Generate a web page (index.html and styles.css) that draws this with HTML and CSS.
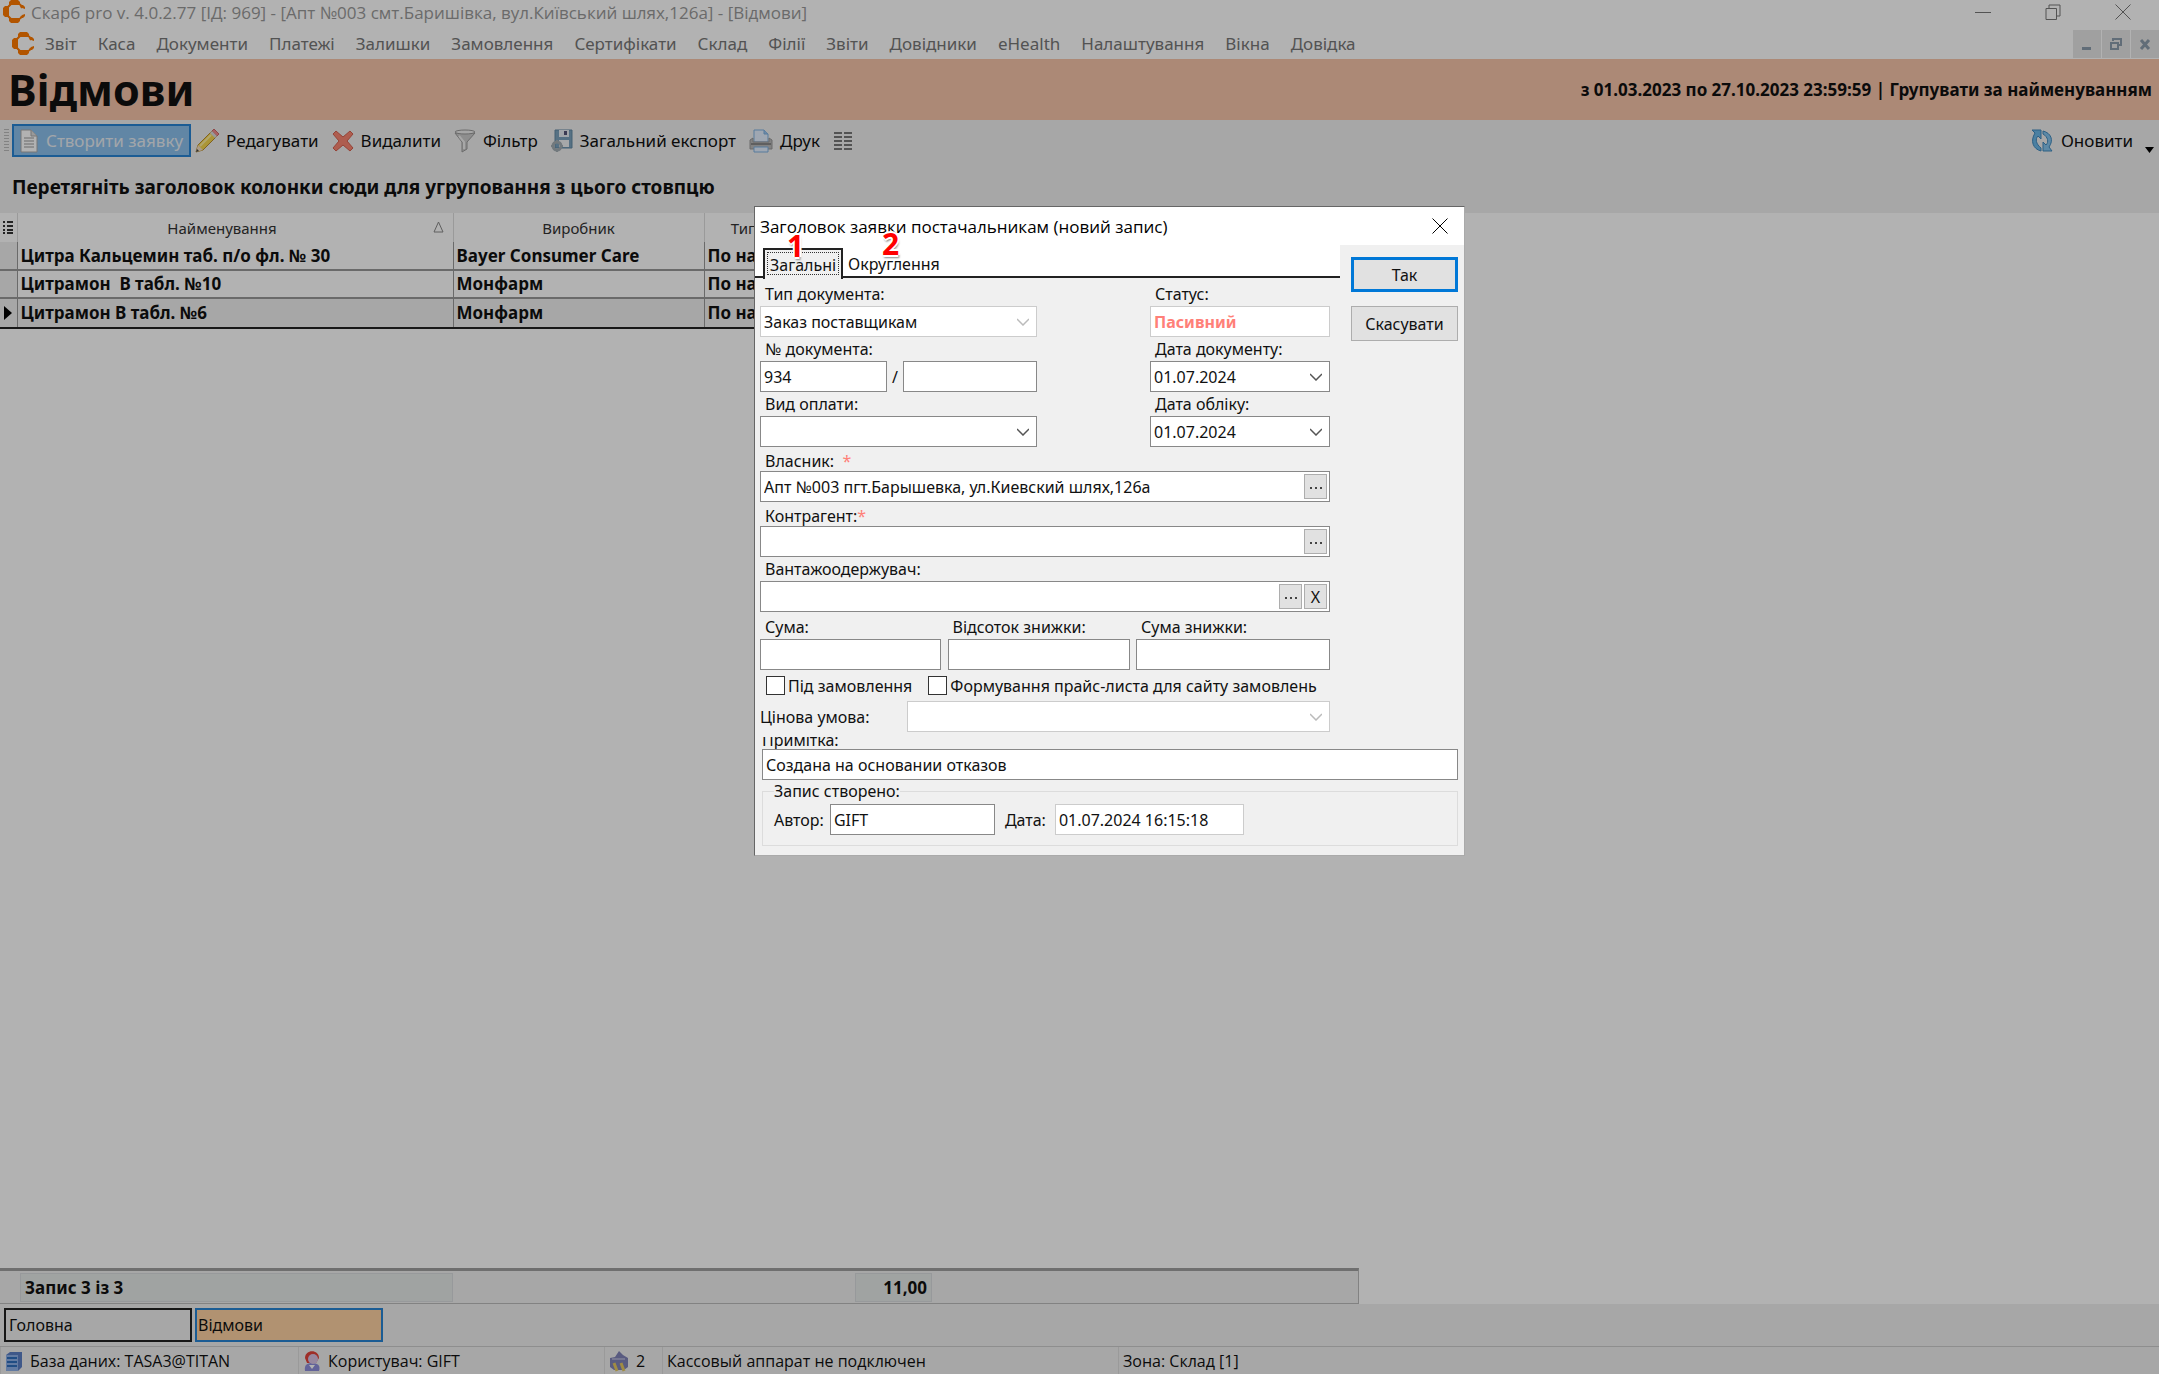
FILE: index.html
```html
<!DOCTYPE html>
<html lang="uk">
<head>
  <meta charset="UTF-8" />
  <meta name="viewport" content="width=device-width, initial-scale=1.0"/>
  <title>Скарб pro - Відмови</title>
  <link rel="stylesheet" href="styles.css">
</head>
<body>
  <svg class="sprite" width="0" height="0">
    <symbol id="logo" viewBox="0 0 22 24">
      <path d="M8 0h7l2 2v3H6V2zM0 8l2-2h4v11H2l-2-2zM6 18h11v3l-2 2H8l-2-2z" fill="#ff7a00"/>
      <path d="M18 5h2l2 2v2l-3-1zM18 18h2l2-2v-2l-3 1z" fill="#ff7a00"/>
      <path d="M17 4l2 4M5 7l3-3M5 16l3 3M17 19l2-3" stroke="#ff7a00" stroke-width="2"/>
    </symbol>
    <symbol id="restore" viewBox="0 0 16 16">
      <path d="M1 4.500h10.500v11H1zM4 4V1h11v11h-3" fill="none" stroke="currentColor"/>
    </symbol>
    <symbol id="cross" viewBox="0 0 16 16">
      <path d="M0.500 0.500l15 15M15.500 0.500l-15 15" fill="none" stroke="currentColor"/>
    </symbol>
    <symbol id="dots" viewBox="0 0 12 4">
      <path d="M0 1h2v2H0zM5 1h2v2H5zM10 1h2v2h-2z" fill="#444"/>
    </symbol>
  </svg>

  <div class="app">
    <header class="title-bar">
      <svg class="logo" width="22" height="24"><use href="#logo"/></svg>
      <span class="title-text">Скарб pro v. 4.0.2.77 [ІД: 969] - [Апт №003 смт.Баришівка, вул.Київський шлях,126а] - [Відмови]</span>
      <div class="window-buttons">
        <button type="button" aria-label="Згорнути"><svg width="16" height="16"><path d="M0 8.500h16" stroke="currentColor"/></svg></button>
        <button type="button" aria-label="Відновити"><svg width="16" height="16"><use href="#restore"/></svg></button>
        <button type="button" aria-label="Закрити"><svg width="16" height="16"><use href="#cross"/></svg></button>
      </div>
    </header>

    <nav class="menu-bar">
      <svg class="logo" width="22" height="24"><use href="#logo"/></svg>
      <a href="#">Звіт</a>
      <a href="#">Каса</a>
      <a href="#">Документи</a>
      <a href="#">Платежі</a>
      <a href="#">Залишки</a>
      <a href="#">Замовлення</a>
      <a href="#">Сертифікати</a>
      <a href="#">Склад</a>
      <a href="#">Філії</a>
      <a href="#">Звіти</a>
      <a href="#">Довідники</a>
      <a href="#">eHealth</a>
      <a href="#">Налаштування</a>
      <a href="#">Вікна</a>
      <a href="#">Довідка</a>
      <div class="mdi-buttons">
        <button type="button" aria-label="Згорнути вікно"><svg width="14" height="14"><path d="M2 10h9v3H2z" fill="#8c9cac"/></svg></button>
        <button type="button" aria-label="Відновити вікно"><svg width="14" height="14" fill="none" stroke="#8c9cac" stroke-width="2"><path d="M4 4V2h8v6h-2M2 6h7v6H2z"/></svg></button>
        <button type="button" aria-label="Закрити вікно"><svg width="14" height="14"><path d="M3 3l8 9M11 3l-8 9" stroke="#8c9cac" stroke-width="3"/></svg></button>
      </div>
    </nav>

    <div class="banner">
      <h1>Відмови</h1>
      <span class="period">з 01.03.2023 по 27.10.2023 23:59:59 | Групувати за найменуванням</span>
    </div>

    <div class="toolbar">
      <span class="grip"></span>
      <button type="button" class="tool active">
        <svg width="20" height="24" viewBox="0 0 20 24"><path d="M2 1h10l6 6v16H2z" fill="#fff" stroke="#aaa"/><path d="M12 1v6h6" fill="#ddd" stroke="#aaa"/><path d="M5 9h10M5 12h10M5 15h10M5 18h10" fill="none" stroke="#999"/></svg>
        Створити заявку
      </button>
      <button type="button" class="tool">
        <svg width="24" height="24" viewBox="0 0 24 24"><path d="M1 23l2-7L17 2l5 5L8 21z" fill="#f5d64e" stroke="#b98b2e"/><path d="M17 2l2-2 5 5-2 2z" fill="#f48a8a" stroke="#c66"/><path d="M15 4l2-2 5 5-2 2z" fill="#ddd"/><path d="M1 23l2-7 5 5z" fill="#f5dfc0"/><path d="M1 23l1-3 2 2z" fill="#444"/><path d="M5 17L16 6" stroke="#ffee9a" stroke-width="2"/></svg>
        Редагувати
      </button>
      <button type="button" class="tool">
        <svg width="22" height="22" viewBox="0 0 22 22"><path d="M1 4l3-3 7 6 7-6 3 3-6 7 6 7-3 3-7-6-7 6-3-3 6-7z" fill="#f98672" stroke="#d6604f"/></svg>
        Видалити
      </button>
      <button type="button" class="tool">
        <svg width="22" height="24" viewBox="0 0 22 24"><path d="M1 4l7 9v10l5-3v-7l8-9z" fill="#ccc" stroke="#999"/><path d="M5 7l5 6v7" fill="none" stroke="#f0f0f0" stroke-width="2"/><ellipse cx="11" cy="3" rx="10" ry="2" fill="#eee" stroke="#999"/></svg>
        Фільтр
      </button>
      <button type="button" class="tool">
        <svg width="22" height="24" viewBox="0 0 22 24"><path d="M4 1h17v18H4z" fill="#7ba3bd" stroke="#6389a5"/><path d="M8 1h10v7H8z" fill="#e8eef4"/><path d="M13 2h3v4h-3z" fill="#557"/><path d="M8 11h10v7H8z" fill="#eef1f3"/><circle cx="6" cy="17" r="4" fill="none" stroke="#a4aeb4" stroke-width="3"/><path d="M6 11v3M6 20v3M0 17h3M9 17h3" stroke="#a4aeb4" stroke-width="2"/></svg>
        Загальний експорт
      </button>
      <button type="button" class="tool">
        <svg width="24" height="24" viewBox="0 0 24 24"><path d="M5 1h10l4 4v8H5z" fill="#e4f0ff" stroke="#7fb0e0"/><path d="M15 1v4h4" fill="#9cc6f0" stroke="#7fb0e0"/><path d="M1 11l3-2v4h16V9l3 2v9H1z" fill="#bbb" stroke="#999"/><path d="M2 14h20v2H2z" fill="#888"/><path d="M5 18h14v5H5z" fill="#e4f0ff" stroke="#7fb0e0"/></svg>
        Друк
      </button>
      <button type="button" class="tool" aria-label="Колонки">
        <svg width="20" height="18" viewBox="0 0 20 18"><path d="M1 1h8M1 5h8M1 9h8M1 13h8M1 17h8M11 1h8M11 5h8M11 9h8M11 13h8M11 17h8" stroke="#777" stroke-width="2"/></svg>
      </button>
      <button type="button" class="tool refresh">
        <svg width="24" height="24" viewBox="0 0 24 24"><path d="M2 1h9v9L8 7c-3 3-2 8 3 12v3C3 20 0 12 5 4z" fill="#6cb8e8" stroke="#4089bd"/><path d="M22 22h-9v-9l3 3c3-3 2-8-3-11V2c8 2 11 9 6 16z" fill="#86c5ee" stroke="#4089bd"/></svg>
        Оновити
      </button>
      <button type="button" class="drop" aria-label="Ще"><svg width="10" height="6"><path d="M0 0h9L4.500 6z"/></svg></button>
    </div>

    <div class="group-panel">Перетягніть заголовок колонки сюди для угруповання з цього стовпцю</div>

    <main class="grid-area">
      <table class="grid">
        <colgroup>
          <col class="col-mark"><col class="col-name"><col class="col-maker"><col class="col-type"><col>
        </colgroup>
        <thead>
          <tr>
            <th><svg width="10" height="14"><path d="M0 2h2M4 2h6M0 6h2M4 6h6M0 10h2M4 10h6M0 13h2M4 13h6" stroke="#333" stroke-width="2"/></svg></th>
            <th class="sorted">Найменування <svg class="sort" width="11" height="12"><path d="M1 11L5.500 1 10 11z" fill="none" stroke="#888"/></svg></th>
            <th>Виробник</th>
            <th>Тип</th>
            <th></th>
          </tr>
        </thead>
        <tbody>
          <tr><td></td><td>Цитра Кальцемин таб. п/о фл. № 30</td><td>Bayer Consumer Care</td><td>По на</td><td></td></tr>
          <tr><td></td><td>Цитрамон&nbsp; В табл. №10</td><td>Монфарм</td><td>По на</td><td></td></tr>
          <tr class="current"><td><svg width="8" height="14"><path d="M0 0l8 7-8 7z"/></svg></td><td>Цитрамон В табл. №6</td><td>Монфарм</td><td>По на</td><td></td></tr>
        </tbody>
      </table>
    </main>

    <div class="summary">
      <div class="summary-row">
        <span class="summary-count">Запис 3 із 3</span>
        <span class="summary-total">11,00</span>
      </div>
    </div>

    <div class="window-tabs">
      <button type="button">Головна</button>
      <button type="button" class="selected">Відмови</button>
    </div>

    <footer class="status-bar">
      <span class="status-db">
        <svg width="18" height="20" viewBox="0 0 18 20"><path d="M1 4l4-3h12v15l-4 4H1z" fill="#5b7fc4"/><path d="M1 4h12v16H1z" fill="#8fb0e8"/><path d="M2 7h10M2 11h10M2 15h10" stroke="#2f6fbe" stroke-width="2"/></svg>
        База даних: TASA3@TITAN
      </span>
      <span class="status-user">
        <svg width="18" height="22" viewBox="0 0 18 22"><path d="M2 21c-1-6 2-8 7-8s9 2 7 8z" fill="#8f8fdc"/><path d="M2 8c0-9 14-9 14 0l-3 5H4z" fill="#e2433a"/><circle cx="10" cy="9" r="5" fill="#d9c3e4"/><path d="M6 15l3 4 3-4z" fill="#fff"/></svg>
        Користувач: GIFT
      </span>
      <span class="status-shops">
        <svg width="20" height="22" viewBox="0 0 20 22"><path d="M1 8l5-1 4-6 4 4 5 3v9l-4 3H5l-4-3z" fill="#8083b8"/><path d="M5 13l3 8M12 13l3 8" stroke="#e5c860" stroke-width="3"/><path d="M3 9h13" stroke="#a9abd0" stroke-width="2"/></svg>
        2
      </span>
      <span class="status-cash">Кассовый аппарат не подключен</span>
      <span>Зона: Склад [1]</span>
    </footer>
  </div>

  <div class="backdrop"></div>

  <div class="dialog" role="dialog" aria-labelledby="dialog-title">
    <div class="dialog-title">
      <span id="dialog-title">Заголовок заявки постачальникам (новий запис)</span>
      <button type="button" aria-label="Закрити"><svg width="16" height="16"><use href="#cross"/></svg></button>
    </div>
    <div class="dialog-body">
      <div class="dialog-main">
        <div class="tabs">
          <button type="button" class="tab active">Загальні<span class="step">1</span></button>
          <button type="button" class="tab">Округлення<span class="step">2</span></button>
        </div>
        <form class="form" id="order-form">
          <div class="split">
            <div class="field">
              <label for="doc-type">Тип документа:</label>
              <select id="doc-type" disabled><option>Заказ поставщикам</option></select>
            </div>
            <div class="field">
              <label for="status">Статус:</label>
              <input type="text" id="status" class="status-value" value="Пасивний" disabled />
            </div>
          </div>
          <div class="split">
            <div class="field">
              <label for="doc-number">№ документа:</label>
              <div class="number-row">
                <input type="text" id="doc-number" value="934" />
                <span>/</span>
                <input type="text" aria-label="Суфікс номера" />
              </div>
            </div>
            <div class="field">
              <label for="doc-date">Дата документу:</label>
              <select id="doc-date"><option>01.07.2024</option></select>
            </div>
          </div>
          <div class="split">
            <div class="field">
              <label for="payment">Вид оплати:</label>
              <select id="payment"><option></option></select>
            </div>
            <div class="field">
              <label for="account-date">Дата обліку:</label>
              <select id="account-date"><option>01.07.2024</option></select>
            </div>
          </div>
          <div class="field spaced">
            <label for="owner">Власник: &nbsp;<span class="required">*</span></label>
            <div class="lookup">
              <input type="text" id="owner" value="Апт №003 пгт.Барышевка, ул.Киевский шлях,126а" />
              <button type="button" aria-label="Вибрати власника"><svg width="12" height="4"><use href="#dots"/></svg></button>
            </div>
          </div>
          <div class="field spaced">
            <label for="agent">Контрагент:<span class="required">*</span></label>
            <div class="lookup">
              <input type="text" id="agent" />
              <button type="button" aria-label="Вибрати контрагента"><svg width="12" height="4"><use href="#dots"/></svg></button>
            </div>
          </div>
          <div class="field">
            <label for="receiver">Вантажоодержувач:</label>
            <div class="lookup">
              <input type="text" id="receiver" />
              <button type="button" aria-label="Вибрати вантажоодержувача"><svg width="12" height="4"><use href="#dots"/></svg></button>
              <button type="button">X</button>
            </div>
          </div>
          <div class="sums">
            <div class="field">
              <label for="sum">Сума:</label>
              <input type="text" id="sum" />
            </div>
            <div class="field">
              <label for="discount">Відсоток знижки:</label>
              <input type="text" id="discount" />
            </div>
            <div class="field">
              <label for="discount-sum">Сума знижки:</label>
              <input type="text" id="discount-sum" />
            </div>
          </div>
          <div class="checks">
            <input type="checkbox" id="on-order" /><label for="on-order">Під замовлення</label>
            <input type="checkbox" id="price-list" /><label for="price-list">Формування прайс-листа для сайту замовлень</label>
          </div>
          <div class="price-row">
            <label for="price-rule">Цінова умова:</label>
            <select id="price-rule" disabled><option></option></select>
          </div>
        </form>
      </div>
      <div class="dialog-buttons">
        <button type="submit" form="order-form" class="ok">Так</button>
        <button type="button">Скасувати</button>
      </div>
    </div>
    <div class="dialog-bottom">
      <label for="note" class="note-label">Примітка:</label>
      <input type="text" id="note" form="order-form" value="Создана на основании отказов" />
      <fieldset>
        <legend>Запис створено:</legend>
        <label for="author">Автор:</label>
        <input type="text" id="author" value="GIFT" />
        <label for="created">Дата:</label>
        <input type="text" id="created" value="01.07.2024 16:15:18" disabled />
      </fieldset>
    </div>
  </div>
</body>
</html>
```
FILE: styles.css
```css
* {
  box-sizing: border-box;
}
body {
  margin: 0;
  background: #fff;
  font-family: "Noto Sans", "Open Sans", sans-serif;
  font-size: 16px;
  color: #111;
}
button, input, select {
  font: inherit;
  color: inherit;
}
button {
  padding: 0;
  background: none;
  border: none;
  white-space: nowrap;
}
svg {
  flex-shrink: 0;
}
.sprite {
  position: absolute;
}
.app {
  display: flex;
  flex-direction: column;
  min-height: 100vh;
  background: #f0f0f0;
}

/* window title and menu */
.title-bar {
  display: flex;
  align-items: center;
  height: 28px;
  padding: 0 0 4px 3px;
  background: #fff;
  color: #999;
  font-family: "Open Sans", sans-serif;
  font-size: 17px;
}
.title-text {
  margin-left: 6px;
}
.window-buttons {
  display: flex;
  gap: 54px;
  margin-left: auto;
  padding-right: 28px;
  color: #777;
}
.window-buttons button {
  display: flex;
}
.menu-bar {
  display: flex;
  align-items: center;
  gap: 21px;
  height: 31px;
  padding-left: 12px;
  background: #fff;
  font-size: 17px;
}
.menu-bar a {
  color: #777;
  text-decoration: none;
}
.menu-bar .logo {
  margin-right: -10px;
}
.mdi-buttons {
  display: flex;
  gap: 1px;
  margin-left: auto;
}
.mdi-buttons button {
  display: flex;
  align-items: center;
  justify-content: center;
  width: 28px;
  height: 28px;
  background: #e6e6e6;
}

/* banner */
.banner {
  display: flex;
  align-items: center;
  justify-content: space-between;
  height: 61px;
  padding: 0 7px 0 8px;
  background: #f7c4a9;
}
.banner h1 {
  margin: 0;
  font-size: 43px;
  line-height: 60px;
}
.period {
  font-size: 17px;
  font-weight: bold;
}

/* toolbar */
.toolbar {
  display: flex;
  align-items: center;
  height: 41px;
  padding-left: 4px;
  font-size: 17px;
}
.grip {
  width: 5px;
  height: 24px;
  margin-right: 3px;
  background: repeating-linear-gradient(#bbb 0 1px, #f0f0f0 1px 3px);
}
.tool {
  display: flex;
  align-items: center;
  gap: 7px;
  height: 33px;
  padding: 0 8px 0 5px;
}
.tool.active {
  padding: 0 6px 0 5px;
  background: #8cc0ec;
  border: 2px solid #2785d5;
  color: #e8eef4;
}
.tool.active + .tool {
  padding-left: 4px;
}
.refresh {
  margin-left: auto;
}
.drop {
  width: 18px;
  padding-top: 12px;
}
.group-panel {
  height: 52px;
  padding: 12px;
  font-size: 19px;
  font-weight: bold;
  line-height: 28px;
}

/* grid */
.grid-area {
  flex: 1;
  background: #fff;
}
.grid {
  width: 1358px;
  table-layout: fixed;
  border-collapse: collapse;
}
.col-mark { width: 17px; }
.col-name { width: 436px; }
.col-maker { width: 251px; }
.col-type { width: 80px; }
.grid th {
  position: relative;
  height: 29px;
  padding: 0;
  border-right: 1px solid #ddd;
  font-size: 15px;
  font-weight: normal;
  color: #333;
}
.grid .sorted {
  padding-right: 26px;
}
.sort {
  position: absolute;
  right: 9px;
  top: 8px;
}
.grid td {
  height: 28px;
  padding: 0 3px;
  border: 1px solid #999;
  border-width: 0 1px 2px;
  font-size: 17px;
  font-weight: bold;
  line-height: 24px;
  white-space: nowrap;
}
.grid td:first-child {
  padding: 0 4px;
  background: #f0f0f0;
  border-left: none;
}
.grid .current td {
  height: 30px;
  border-top: 2px solid #222;
  border-bottom: 2px solid #222;
  background: #f0f0f0;
}
.grid td:first-child svg {
  display: block;
}

/* grid footer */
.summary {
  background: #fff;
}
.summary-row {
  display: flex;
  width: 1359px;
  height: 36px;
  padding: 2px 0 1px 20px;
  background: #f0f0f0;
  border: 1px solid #bbb;
  border-top: 3px solid #a0a0a0;
  border-left: none;
  font-size: 17px;
  font-weight: bold;
}
.summary-row span {
  padding: 0 4px;
  background: #e6eae8;
  border: 1px solid #d8dcde;
  line-height: 28px;
}
.summary-count {
  width: 433px;
}
.summary-total {
  width: 77px;
  margin-left: 402px;
  text-align: right;
}

/* open windows */
.window-tabs {
  display: flex;
  gap: 3px;
  padding: 4px;
}
.window-tabs button {
  width: 188px;
  height: 34px;
  padding-left: 3px;
  border: 2px solid #222;
  text-align: left;
}
.window-tabs .selected {
  background: #fed1a3;
  border-color: #2785d5;
  padding-left: 1px;
}
.status-bar {
  display: flex;
  height: 28px;
  border-top: 1px solid #ccc;
  font-family: "Open Sans", sans-serif;
}
.status-bar span {
  display: flex;
  align-items: center;
  gap: 7px;
  padding-left: 4px;
  border-left: 1px solid #ddd;
}
.status-bar .status-db { width: 298px; }
.status-bar .status-user { width: 306px; }
.status-bar .status-shops { width: 58px; }
.status-bar .status-cash { width: 456px; }

.backdrop {
  position: fixed;
  inset: 0;
  background: rgba(0, 0, 0, 0.3);
}

/* order dialog */
.dialog {
  position: absolute;
  left: 754px;
  top: 206px;
  width: 711px;
  background: #f0f0f0;
  border: 1px solid #666;
  border-right-color: #aaa;
  border-bottom-color: #aaa;
}
.dialog-title {
  display: flex;
  align-items: center;
  justify-content: space-between;
  height: 38px;
  padding: 0 16px 0 5px;
  background: #fff;
  color: #000;
  font-family: "Open Sans", sans-serif;
  font-size: 17px;
}
.dialog-title button {
  display: flex;
}
.dialog-body {
  display: flex;
}
.dialog-main {
  width: 585px;
}
.tabs {
  display: flex;
  height: 33px;
  padding: 3px 8px 0;
  background: #fff;
  border-bottom: 2px solid #222;
}
.tab {
  position: relative;
  height: 30px;
  padding: 2px 5px 0;
}
.tab.active {
  height: 31px;
  padding: 0 5px;
  background: #f0f0f0;
  border: 2px solid #222;
  border-bottom: none;
  outline: 1px dotted #333;
  outline-offset: -5px;
}
.step {
  position: absolute;
  left: 22px;
  top: -24px;
  color: #f00;
  font-size: 30px;
  font-weight: bold;
  line-height: 40px;
  text-shadow: -2px 0 #fff, 2px 0 #fff, 0 -2px #fff, 0 2px #fff, 1px 3px 2px #888;
}
.tab:last-child .step {
  left: 39px;
}
.form {
  display: flex;
  flex-direction: column;
  padding: 4px 10px 0 5px;
}
.split {
  display: grid;
  grid-template-columns: 277px 180px;
  justify-content: space-between;
}
.field label {
  display: block;
  height: 24px;
  padding-left: 5px;
  line-height: 24px;
}
.spaced label {
  padding-top: 2px;
}
.dialog input[type="text"], .dialog select {
  display: block;
  width: 100%;
  height: 31px;
  padding: 0 3px;
  border: 1px solid #888;
  border-radius: 0;
  background: #fff;
  color: #111;
  opacity: 1;
}
.dialog select {
  appearance: none;
  background: #fff url("data:image/svg+xml,%3Csvg xmlns='http://www.w3.org/2000/svg' width='12' height='8'%3E%3Cpath d='M0 1l6 6 6-6' fill='none' stroke='%23555' stroke-width='1.500'/%3E%3C/svg%3E") no-repeat right 7px center;
}
.dialog input[type="text"]:disabled, .dialog select:disabled {
  border-color: #ccc;
}
.dialog select:disabled {
  background-image: url("data:image/svg+xml,%3Csvg xmlns='http://www.w3.org/2000/svg' width='12' height='8'%3E%3Cpath d='M0 1l6 6 6-6' fill='none' stroke='%23bbb' stroke-width='1.500'/%3E%3C/svg%3E");
}
.dialog .status-value:disabled {
  color: #ff8078;
  font-weight: bold;
}
.number-row {
  display: grid;
  grid-template-columns: 127px 16px 134px;
  align-items: center;
  text-align: center;
}
.required {
  color: #ff8078;
}
.lookup {
  display: flex;
  gap: 2px;
  height: 31px;
  padding: 2px;
  background: #fff;
  border: 1px solid #888;
}
.dialog .lookup input {
  flex: 1;
  height: 25px;
  padding: 0 1px;
  border: none;
}
.lookup button {
  width: 23px;
  height: 25px;
  background: #e1e1e1;
  border: 1px solid #adadad;
}
.lookup svg {
  vertical-align: middle;
}
.sums {
  display: grid;
  grid-template-columns: 181px 182px 194px;
  justify-content: space-between;
  padding-top: 3px;
}
.checks {
  display: flex;
  align-items: center;
  height: 31px;
  padding-left: 6px;
}
.checks input {
  appearance: none;
  width: 19px;
  height: 19px;
  margin: 0 3px 0 0;
  background: #fff;
  border: 1px solid #333;
}
.checks label {
  margin-right: 16px;
  white-space: nowrap;
}
.checks label:last-child {
  margin: 0;
}
.price-row {
  display: flex;
  align-items: center;
}
.dialog .price-row select {
  width: 423px;
  margin-left: auto;
}
.dialog-buttons {
  display: flex;
  flex-direction: column;
  gap: 14px;
  width: 118px;
  padding: 12px 0 0 11px;
}
.dialog-buttons button {
  height: 35px;
  background: #e1e1e1;
  border: 1px solid #adadad;
}
.dialog-buttons .ok {
  border: 3px solid #0078d7;
}
.dialog-bottom {
  padding: 5px 6px 9px 7px;
}
.note-label {
  display: flex;
  align-items: flex-end;
  height: 12px;
  overflow: hidden;
  line-height: 18px;
}
fieldset {
  display: flex;
  align-items: center;
  height: 66px;
  margin: 0;
  padding: 0 11px 8px;
  border: 1px solid #dcdcdc;
}
legend {
  padding: 0;
  line-height: 22px;
}
.dialog #author {
  width: 165px;
  margin: 0 10px 0 6px;
}
.dialog #created {
  width: 189px;
  margin-left: 9px;
}
```
